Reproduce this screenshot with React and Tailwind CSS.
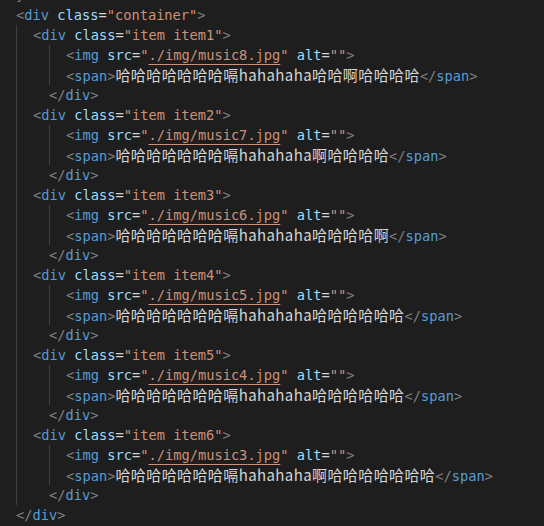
import React from "react";

const mono = "font-['DejaVu_Sans_Mono','Liberation_Mono',monospace] text-[13.7px]";
const cjk = "font-['Noto_Sans_CJK_SC','Noto_Sans',sans-serif] text-[15px] tracking-[0.4px] text-[#d4d4d4]";

const B = ({ children }) => <span className="text-[#808080]">{children}</span>;
const T = ({ children }) => <span className="text-[#569cd6]">{children}</span>;
const A = ({ children }) => <span className="text-[#9cdcfe]">{children}</span>;
const E = () => <span className="text-[#d4d4d4]">=</span>;
const S = ({ children }) => <span className="text-[#ce9178]">{children}</span>;

function Line({ pad = "", children }) {
  return (
    <div className={`h-[20px] leading-[20px] whitespace-pre ${mono} ${pad}`}>{children}</div>
  );
}

const items = [
  { n: 1, img: "music8", text: "哈哈哈哈哈哈哈嗝hahahaha哈哈啊哈哈哈哈" },
  { n: 2, img: "music7", text: "哈哈哈哈哈哈哈嗝hahahaha啊哈哈哈哈" },
  { n: 3, img: "music6", text: "哈哈哈哈哈哈哈嗝hahahaha哈哈哈哈啊" },
  { n: 4, img: "music5", text: "哈哈哈哈哈哈哈嗝hahahaha哈哈哈哈哈哈" },
  { n: 5, img: "music4", text: "哈哈哈哈哈哈哈嗝hahahaha哈哈哈哈哈哈" },
  { n: 6, img: "music3", text: "哈哈哈哈哈哈哈嗝hahahaha啊哈哈哈哈哈哈哈" },
];

export default function App() {
  return (
    <div className="w-[544px] h-[526px] bg-[#1e1e1e] overflow-hidden">
      <div className="-mt-[15px]">
        <Line pad="pl-[16px]">
          <span className="text-[#808080]">{"}"}</span>
        </Line>
        <Line pad="pl-[16px]">
          <B>&lt;</B>
          <T>div</T> <A>class</A>
          <E />
          <S>"container"</S>
          <B>&gt;</B>
        </Line>
        <div className="ml-[16px] border-l border-[#404040]">
          {items.map((it) => (
            <div key={it.n}>
              <Line pad="pl-[16px]">
                <B>&lt;</B>
                <T>div</T> <A>class</A>
                <E />
                <S>"item item{it.n}"</S>
                <B>&gt;</B>
              </Line>
              <div className="ml-[32px] border-l border-[#404040]">
                <Line pad="pl-[16px]">
                  <B>&lt;</B>
                  <T>img</T> <A>src</A>
                  <E />
                  <S>"</S>
                  <span className="text-[#ce9178] underline decoration-[#ce9178] underline-offset-[4px]">
                    ./img/{it.img}.jpg
                  </span>
                  <S>"</S> <A>alt</A>
                  <E />
                  <S>""</S>
                  <B>&gt;</B>
                </Line>
                <Line pad="pl-[16px]">
                  <B>&lt;</B>
                  <T>span</T>
                  <B>&gt;</B>
                  <span className={cjk}>{it.text}</span>
                  <B>&lt;/</B>
                  <T>span</T>
                  <B>&gt;</B>
                </Line>
              </div>
              <Line pad="pl-[32px]">
                <B>&lt;/</B>
                <T>div</T>
                <B>&gt;</B>
              </Line>
            </div>
          ))}
        </div>
        <Line pad="pl-[16px]">
          <B>&lt;/</B>
          <T>div</T>
          <B>&gt;</B>
        </Line>
      </div>
    </div>
  );
}
